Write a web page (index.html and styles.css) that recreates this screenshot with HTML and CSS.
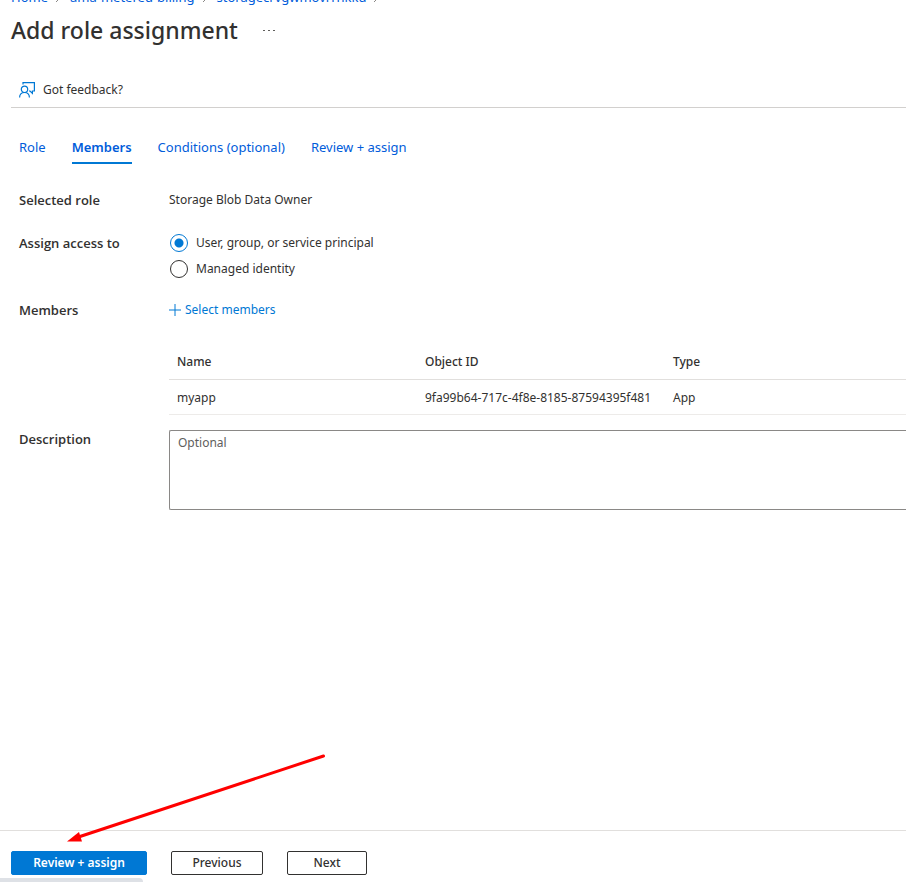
FILE: index.html
```html
<!DOCTYPE html>
<html lang="en">
<head>
<meta charset="utf-8">
<title>Add role assignment</title>
<link rel="stylesheet" href="styles.css">
</head>
<body>
<header class="header">
  <nav class="crumbs" aria-label="Breadcrumb">
    <a href="#">Home</a>
    <svg class="chevron" viewBox="0 0 6 12" aria-hidden="true"><path d="M0 1l5 5-5 5"/></svg>
    <a href="#">ama-metered-billing</a>
    <svg class="chevron" viewBox="0 0 6 12" aria-hidden="true"><path d="M0 1l5 5-5 5"/></svg>
    <a href="#">storagecrvgwmovrrhkkd</a>
    <svg class="chevron" viewBox="0 0 6 12" aria-hidden="true"><path d="M0 1l5 5-5 5"/></svg>
  </nav>
  <div class="title-row">
    <h1>Add role assignment</h1>
    <button class="more" type="button" aria-label="More">
      <svg viewBox="0 0 12 2" aria-hidden="true"><path d="M0 1h2v1H0zM5 1h2v1H5zM10 1h2v1h-2z"/></svg>
    </button>
  </div>
</header>
<div class="toolbar">
  <button class="feedback" type="button">
    <svg viewBox="0 0 16 16" aria-hidden="true"><path d="M4 2.500V.6h11.400v8.400h-2v2.400L11 9h-1"/><circle cx="5.500" cy="7.300" r="3.200"/><path d="M.6 15.600c0-3 2-5.100 4.900-5.100s4.900 2.100 4.900 5.100"/></svg>
    Got feedback?
  </button>
</div>
<nav class="tabs" aria-label="Steps">
  <a href="#">Role</a>
  <a href="#" class="active" aria-current="step">Members</a>
  <a href="#">Conditions (optional)</a>
  <a href="#">Review + assign</a>
</nav>
<main>
  <form class="form" id="assignment">
    <div class="row">
      <span class="label">Selected role</span>
      <span>Storage Blob Data Owner</span>
    </div>
    <div class="row access" role="radiogroup" aria-labelledby="access-label">
      <span class="label" id="access-label">Assign access to</span>
      <div class="options">
        <label><input type="radio" name="access" checked>User, group, or service principal</label>
        <label><input type="radio" name="access">Managed identity</label>
      </div>
    </div>
    <div class="row members">
      <span class="label">Members</span>
      <div>
        <a class="add" href="#"><svg viewBox="0 0 12 12" aria-hidden="true"><path d="M6 0v12M0 6h12"/></svg>Select members</a>
        <table>
          <thead><tr><th scope="col">Name</th><th scope="col">Object ID</th><th scope="col">Type</th></tr></thead>
          <tbody><tr><td>myapp</td><td>9fa99b64-717c-4f8e-8185-87594395f481</td><td>App</td></tr></tbody>
        </table>
      </div>
    </div>
    <div class="row description">
      <label class="label" for="description">Description</label>
      <textarea id="description" placeholder="Optional"></textarea>
    </div>
  </form>
</main>
<footer class="footer">
  <button class="btn primary" type="submit" form="assignment">Review + assign</button>
  <button class="btn" type="button">Previous</button>
  <button class="btn next" type="button">Next</button>
  <svg class="arrow" viewBox="0 0 258 90" aria-hidden="true"><path class="shaft" d="M256.500 3L13 83.500"/><path class="head" d="M0 88.500l12-9.500 3 9.500z"/></svg>
  <div class="status"></div>
</footer>
</body>
</html>
```

FILE: styles.css
```css
* { box-sizing: border-box; }

body {
  margin: 0;
  min-height: 100vh;
  display: flex;
  flex-direction: column;
  overflow: hidden;
  background: #fff;
  color: #323130;
  font: 12px/18px "Segoe UI", "Noto Sans", sans-serif;
}

a { color: #015cda; text-decoration: none; }
button, textarea { font: inherit; color: inherit; }
svg { fill: none; flex: none; }

.header { padding-left: 11px; }

.crumbs,
.tabs { font-size: 13px; }

.crumbs {
  display: flex;
  align-items: center;
  gap: 8px;
  height: 18px;
  margin-top: -12px;
}
.chevron { width: 6px; height: 12px; stroke: #8a8886; }

.title-row { display: flex; align-items: center; gap: 25px; height: 48px; }
h1 { margin: 0; font-size: 23px; line-height: 32px; font-weight: 500; }
.more { border: 0; padding: 0; background: none; display: flex; }
.more svg { width: 12px; height: 2px; fill: #605e5c; }

.toolbar {
  display: flex;
  align-items: center;
  height: 36px;
  margin: 18px 0 0 11px;
  padding-left: 8px;
  border-bottom: 1px solid #d2d0ce;
}
.feedback { display: flex; align-items: center; gap: 8px; padding: 0; border: 0; background: none; }
.feedback svg { width: 16px; height: 16px; stroke: #0078d4; stroke-width: 1.2; }

.tabs { display: flex; gap: 26px; margin: 24px 0 0 19px; }
.tabs a { padding: 6px 0; border-bottom: 2px solid transparent; }
.tabs .active { font-weight: 600; border-color: #0078d4; }

main { flex: 1; padding: 27px 0 0 19px; }
.row { display: grid; grid-template-columns: 150px 1fr; align-items: start; }
.label { font-family: "Segoe UI", "Open Sans", sans-serif; font-size: 13px; font-weight: 600; }

.access { margin-top: 25px; }
.options { display: grid; gap: 8px; }
.options label { display: flex; align-items: center; gap: 8px; height: 18px; }
.options input {
  appearance: none;
  width: 18px;
  height: 18px;
  margin: 0 0 0 1px;
  border: 1px solid #323130;
  border-radius: 50%;
}
.options input:checked {
  border-color: #0078d4;
  background: radial-gradient(circle, #0078d4 4px, transparent 5px);
}

.members { margin-top: 23px; }
.add { display: flex; width: max-content; align-items: center; gap: 4px; color: #0078d4; }
.add svg { width: 12px; height: 12px; stroke: #0078d4; }

table { width: 100%; margin-top: 24px; border-collapse: collapse; table-layout: fixed; }
th, td { padding: 2px 0 0 8px; text-align: left; white-space: nowrap; }
th { height: 36px; font-weight: 500; border-bottom: 1px solid #e1dfdd; }
td { height: 35px; border-bottom: 1px solid #edebe9; }
th:nth-child(-n+2) { width: 248px; }

.description { margin-top: 15px; }
textarea {
  width: 100%;
  height: 80px;
  padding: 3px 8px;
  border: 1px solid #8a8886;
  border-right: 0;
  border-radius: 2px 0 0 2px;
  resize: none;
  display: block;
}
textarea::placeholder { color: #605e5c; opacity: 1; }

.footer {
  position: relative;
  display: flex;
  align-items: flex-start;
  gap: 24px;
  height: 52px;
  padding: 20px 11px 0;
  border-top: 1px solid #e1dfdd;
}
.btn {
  width: 92px;
  height: 24px;
  padding: 0 0 1px;
  border: 1px solid #323130;
  border-radius: 2px;
  background: #fff;
  font-weight: 500;
  line-height: 20px;
}
.primary { width: 136px; border-color: #0078d4; background: #0078d4; color: #fff; font-weight: 600; }
.next { width: 80px; }

.arrow { position: absolute; left: 67px; bottom: 39px; width: 258px; height: 90px; }
.shaft { stroke: #f00; stroke-width: 3; stroke-linecap: round; }
.head { fill: #f00; }
.status {
  position: absolute;
  left: 0;
  bottom: 0;
  width: 143px;
  height: 4px;
  border-radius: 0 4px 0 0;
  background: #dee1e6;
}
```
